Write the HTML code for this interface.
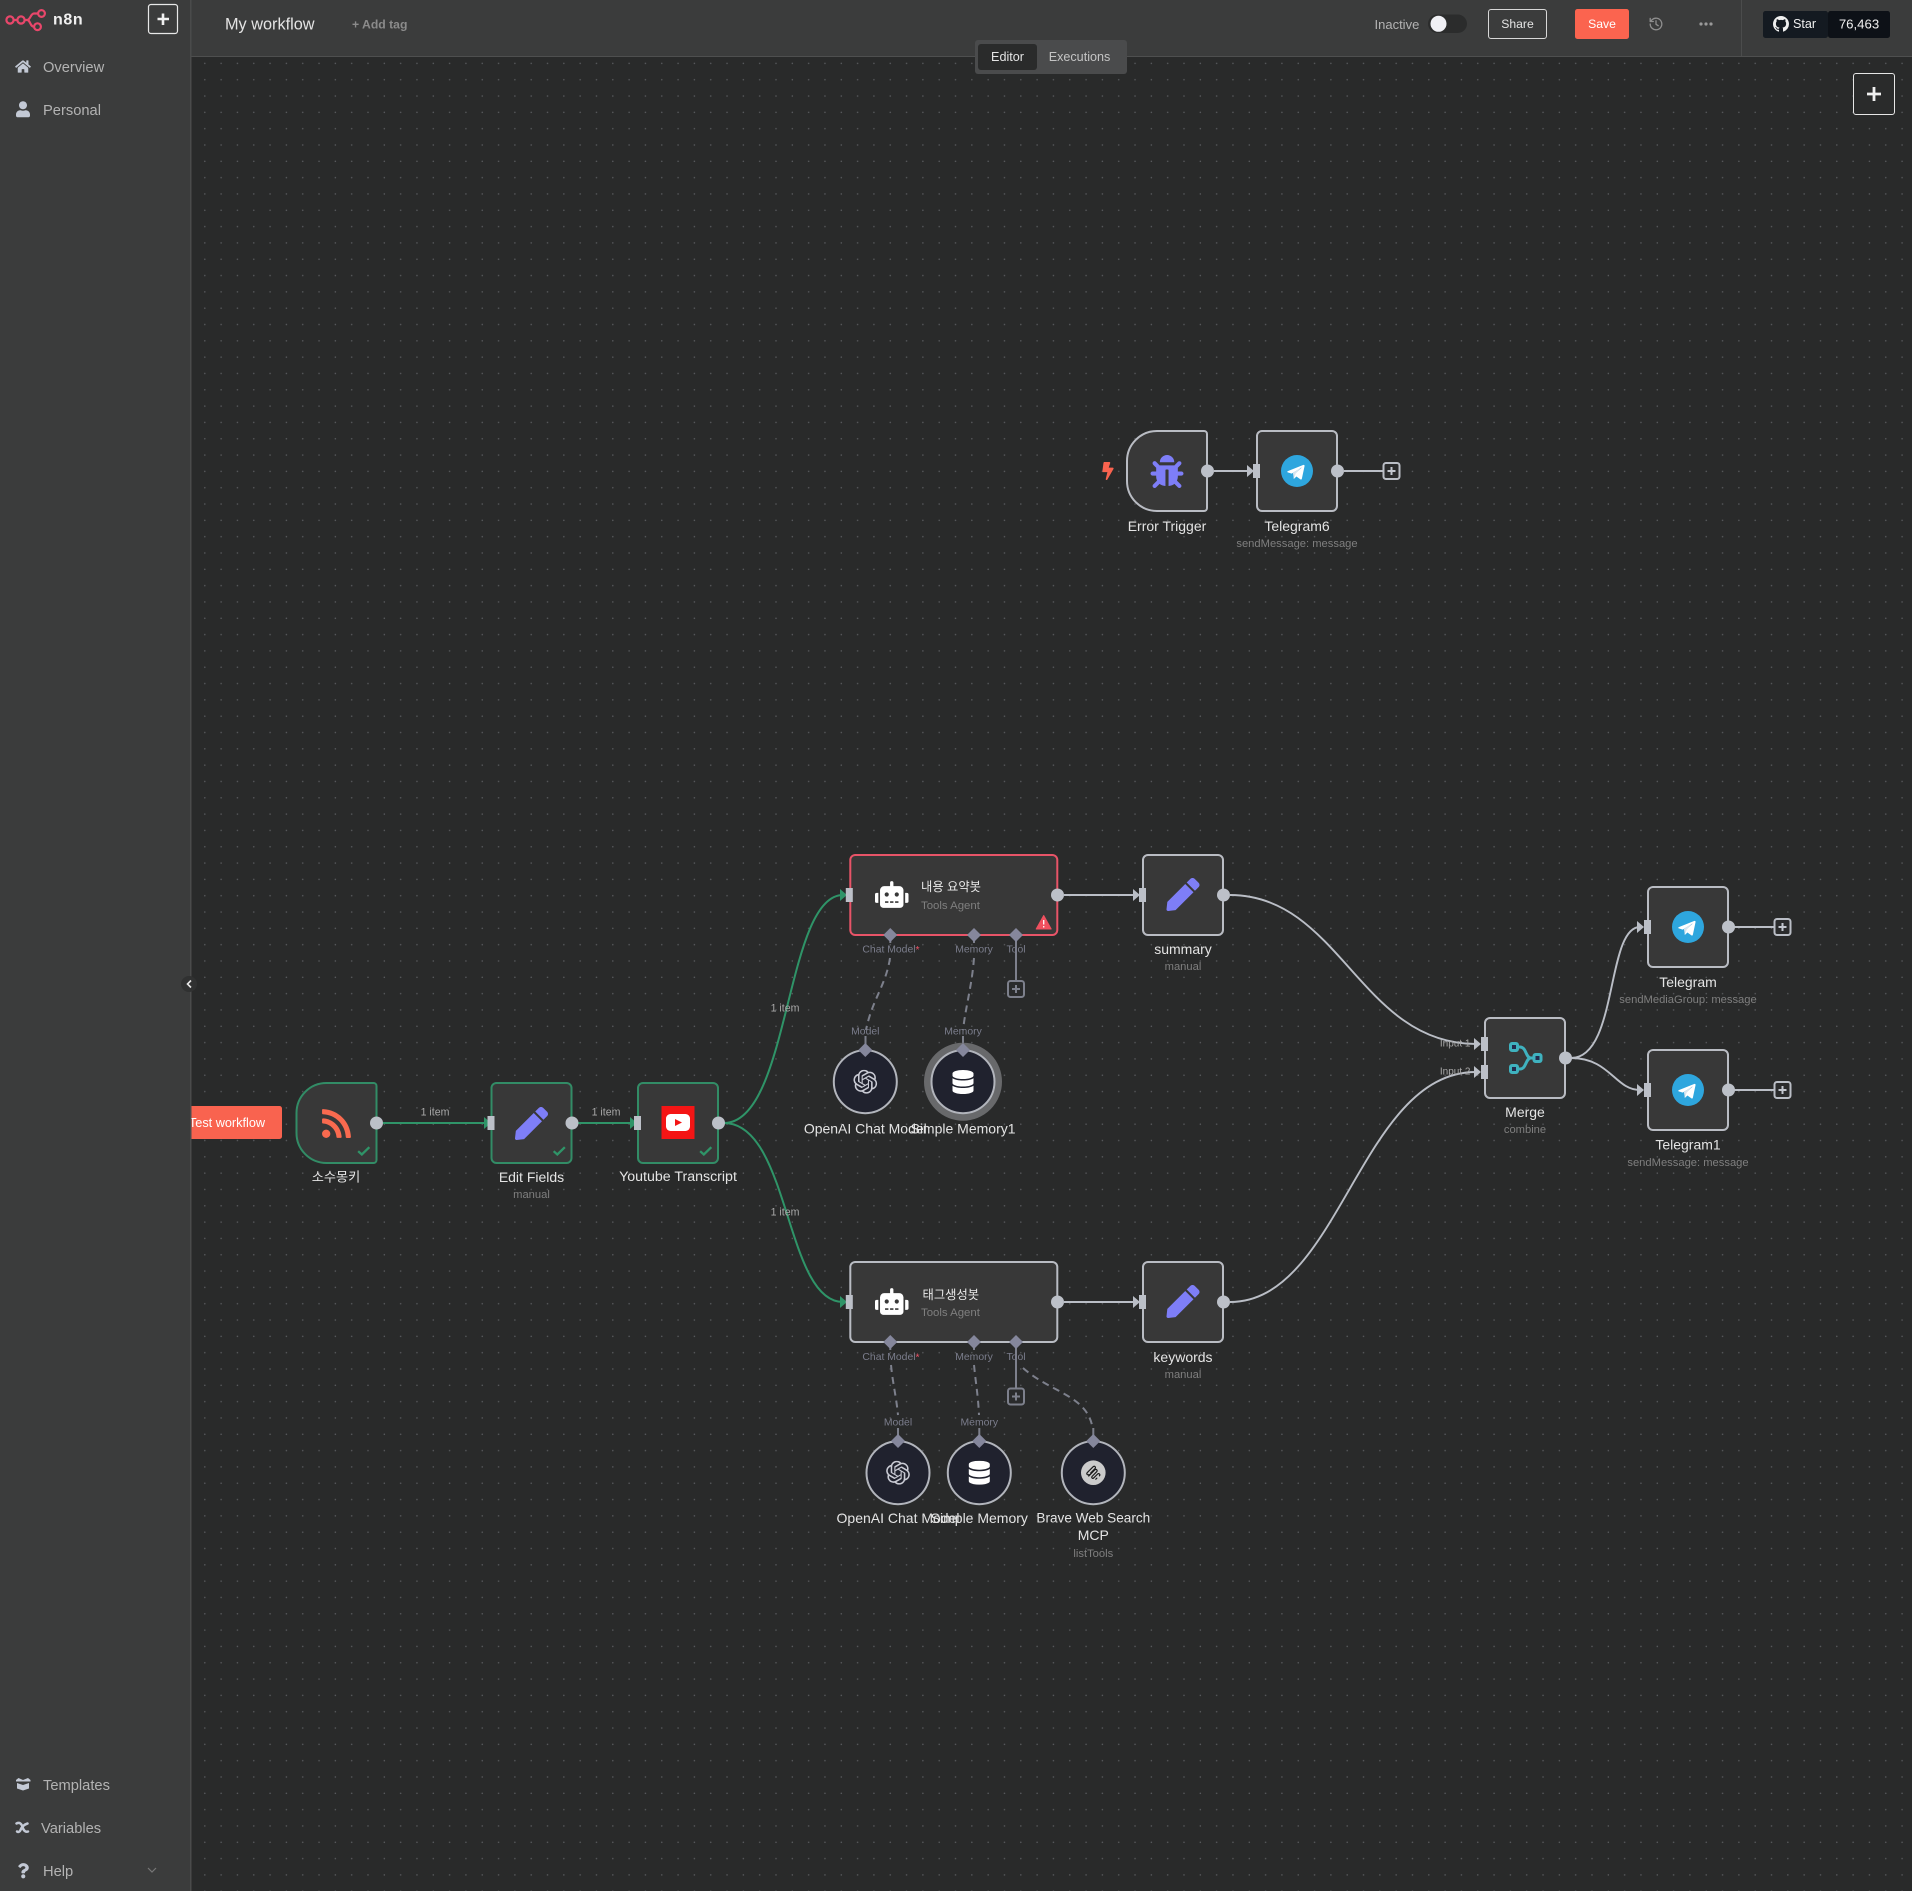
<!DOCTYPE html>
<html lang="en">
<head>
<meta charset="utf-8">
<title>My workflow - n8n</title>
<style>
html,body{margin:0;padding:0;background:#282929;width:1912px;height:1891px;overflow:hidden}
svg{display:block}
text{font-family:"Liberation Sans","Noto Sans CJK KR",sans-serif;dominant-baseline:central}
.l{font-size:14px;fill:#e4e4e4;text-anchor:middle;transform:translateY(.1px)}
.s{font-size:11.2px;fill:#7f7f7f;text-anchor:middle;transform:translateY(.8px)}
.a{font-size:10.4px;fill:#7b7d8c;text-anchor:middle;transform:translateY(.5px)}
.i{font-size:10.6px;fill:#a8a8a8;text-anchor:middle;transform:translateY(.5px)}
.n{font-size:14.7px;fill:#b3b3b3;transform:translateY(.8px)}
.t{transform:translateY(.8px)}
.node{fill:#383838;stroke:#b9bcc3;stroke-width:2}
.g{stroke:#328c66}
.e{fill:none;stroke:#babec6;stroke-width:1.9}
.eg{fill:none;stroke:#2f9468;stroke-width:2}
.d{fill:none;stroke:#7d808c;stroke-width:2;stroke-dasharray:7 5}
.sl{fill:none;stroke:#7d808c;stroke-width:2}
.dm{fill:#85879c}
.circ{fill:#20222e;stroke:#b2b5bc;stroke-width:2}
.o{fill:#bcc0c8}
.b{fill:#bcc0c8}
.ag{fill:#2f9468}
.aw{fill:#babec6}
.pl{fill:#2a2b2c;stroke:#babec6;stroke-width:2}
.plp{fill:none;stroke:#c3c7cf;stroke-width:2}
.pg{fill:#2a2b2c;stroke:#7d808c;stroke-width:2}
.pgp{fill:none;stroke:#7d808c;stroke-width:2}
</style>
</head>
<body>
<svg xmlns="http://www.w3.org/2000/svg" width="1912" height="1891" viewBox="0 0 1912 1891">
<defs>
<pattern id="dots" patternUnits="userSpaceOnUse" x="204" y="62.6" width="16.32" height="16.32">
<circle cx="0.8" cy="0.8" r="0.75" fill="#5a5c5f"/>
</pattern>
<symbol id="pen" viewBox="0 0 512 512"><path d="M290.74 93.24l128.02 128.02-277.99 277.99-114.14 12.6C11.35 513.54-1.56 500.62.14 485.34l12.7-114.22 277.9-277.88zm207.2-19.06l-60.11-60.11c-18.75-18.75-49.16-18.75-67.91 0l-56.55 56.55 128.02 128.02 56.55-56.55c18.75-18.76 18.75-49.16 0-67.91z"/></symbol>
<symbol id="bug" viewBox="0 0 512 512"><path d="M511.988 288.9c-.478 17.43-15.217 31.1-32.653 31.1H424v16c0 21.864-4.882 42.584-13.6 61.145l60.228 60.228c12.496 12.497 12.496 32.758 0 45.255-12.498 12.497-32.759 12.496-45.256 0l-54.736-54.736C345.886 467.965 314.351 480 280 480V236c0-6.627-5.373-12-12-12h-24c-6.627 0-12 5.373-12 12v244c-34.351 0-65.886-12.035-90.636-32.108l-54.736 54.736c-12.498 12.497-32.759 12.496-45.256 0-12.496-12.497-12.496-32.758 0-45.255l60.228-60.228C92.882 378.584 88 357.864 88 336v-16H32.666C15.23 320 .491 306.33.013 288.9-.484 270.816 14.028 256 32 256h56v-58.745l-46.628-46.628c-12.496-12.497-12.496-32.758 0-45.255 12.498-12.497 32.758-12.497 45.256 0L141.255 160h229.489l54.627-54.627c12.498-12.497 32.758-12.497 45.256 0 12.496 12.497 12.496 32.758 0 45.255L424 197.255V256h56c17.972 0 32.484 14.816 31.988 32.9zM257 0c-61.856 0-112 50.144-112 112h224C369 50.144 318.856 0 257 0z"/></symbol>
<symbol id="rss" viewBox="0 0 448 512"><path d="M128.081 415.959c0 35.369-28.672 64.041-64.041 64.041S0 451.328 0 415.959s28.672-64.041 64.041-64.041 64.04 28.673 64.04 64.041zm175.66 47.25c-8.354-154.6-132.185-278.587-286.95-286.95C7.656 175.765 0 183.105 0 192.253v48.069c0 8.415 6.49 15.472 14.887 16.018 111.832 7.284 201.473 96.702 208.772 208.772.547 8.397 7.604 14.887 16.018 14.887h48.069c9.149.001 16.489-7.655 15.995-16.79zm144.249.288C439.596 229.677 251.465 40.445 16.503 32.01 7.473 31.686 0 38.981 0 48.016v48.068c0 8.625 6.835 15.645 15.453 15.999 191.179 7.839 344.627 161.316 352.465 352.465.353 8.618 7.373 15.453 15.999 15.453h48.068c9.034-.001 16.329-7.474 16.005-16.504z"/></symbol>
<symbol id="db" viewBox="0 0 448 512"><path d="M448 73.143v45.714C448 159.143 347.667 192 224 192S0 159.143 0 118.857V73.143C0 32.857 100.333 0 224 0s224 32.857 224 73.143zM448 176v102.857C448 319.143 347.667 352 224 352S0 319.143 0 278.857V176c48.125 33.143 136.208 48.572 224 48.572S399.874 209.143 448 176zm0 160v102.857C448 479.143 347.667 512 224 512S0 479.143 0 438.857V336c48.125 33.143 136.208 48.572 224 48.572S399.874 369.143 448 336z"/></symbol>
<symbol id="robot" viewBox="0 0 640 512"><path d="M32,224H64V416H32A31.96166,31.96166,0,0,1,0,384V256A31.96166,31.96166,0,0,1,32,224Zm512-48V448a64.06328,64.06328,0,0,1-64,64H160a64.06328,64.06328,0,0,1-64-64V176a79.974,79.974,0,0,1,80-80H288V32a32,32,0,0,1,64,0V96H464A79.974,79.974,0,0,1,544,176ZM264,256a40,40,0,1,0-40,40A39.997,39.997,0,0,0,264,256Zm-8,128H192v32h64Zm96,0H288v32h64ZM456,256a40,40,0,1,0-40,40A39.997,39.997,0,0,0,456,256Zm-8,128H384v32h64ZM640,256V384a31.96166,31.96166,0,0,1-32,32H576V224h32A31.96166,31.96166,0,0,1,640,256Z"/></symbol>
<symbol id="openai" viewBox="0 0 24 24"><path d="M22.2819 9.8211a5.9847 5.9847 0 0 0-.5157-4.9108 6.0462 6.0462 0 0 0-6.5098-2.9A6.0651 6.0651 0 0 0 4.9807 4.1818a5.9847 5.9847 0 0 0-3.9977 2.9 6.0462 6.0462 0 0 0 .7427 7.0966 5.98 5.98 0 0 0 .511 4.9107 6.051 6.051 0 0 0 6.5146 2.9001A5.9847 5.9847 0 0 0 13.2599 24a6.0557 6.0557 0 0 0 5.7718-4.2058 5.9894 5.9894 0 0 0 3.9977-2.9001 6.0557 6.0557 0 0 0-.7475-7.0729zm-9.022 12.6081a4.4755 4.4755 0 0 1-2.8764-1.0408l.1419-.0804 4.7783-2.7582a.7948.7948 0 0 0 .3927-.6813v-6.7369l2.02 1.1686a.071.071 0 0 1 .038.052v5.5826a4.504 4.504 0 0 1-4.4945 4.4944zm-9.6607-4.1254a4.4708 4.4708 0 0 1-.5346-3.0137l.142.0852 4.783 2.7582a.7712.7712 0 0 0 .7806 0l5.8428-3.3685v2.3324a.0804.0804 0 0 1-.0332.0615L9.74 19.9502a4.4992 4.4992 0 0 1-6.1408-1.6464zM2.3408 7.8956a4.485 4.485 0 0 1 2.3655-1.9728V11.6a.7664.7664 0 0 0 .3879.6765l5.8144 3.3543-2.0201 1.1685a.0757.0757 0 0 1-.071 0l-4.8303-2.7865A4.504 4.504 0 0 1 2.3408 7.872zm16.5963 3.8558L13.1038 8.364 15.1192 7.2a.0757.0757 0 0 1 .071 0l4.8303 2.7913a4.4944 4.4944 0 0 1-.6765 8.1042v-5.6772a.79.79 0 0 0-.407-.667zm2.0107-3.0231l-.142-.0852-4.7735-2.7818a.7759.7759 0 0 0-.7854 0L9.409 9.2297V6.8974a.0662.0662 0 0 1 .0284-.0615l4.8303-2.7866a4.4992 4.4992 0 0 1 6.6802 4.66zM8.3065 12.863l-2.02-1.1638a.0804.0804 0 0 1-.038-.0567V6.0742a4.4992 4.4992 0 0 1 7.3757-3.4537l-.142.0805L8.704 5.459a.7948.7948 0 0 0-.3927.6813zm1.0976-2.3654l2.602-1.4998 2.6069 1.4998v2.9994l-2.5974 1.4997-2.6067-1.4997Z"/></symbol>
<symbol id="tg" viewBox="0 0 40 40"><circle cx="20" cy="20" r="20" fill="#2ea6de"/><path d="M8.5 20.2l19.5-7.8c.9-.35 1.7.2 1.4 1.6l-3.3 15.6c-.25 1.1-.9 1.4-1.8.9l-5-3.7-2.45 2.35c-.27.27-.5.5-1 .5l.35-5.1 9.2-8.3c.4-.35-.1-.55-.62-.2l-11.4 7.2-4.9-1.5c-1.05-.33-1.07-1.05.22-1.55z" fill="#fff"/><path d="M16.1 29.65l-1.2-7.2 11.9-8.2-8.5 9z" fill="#dbe6ee"/></symbol>
<symbol id="home" viewBox="0 0 576 512"><path d="M280.37 148.26L96 300.11V464a16 16 0 0 0 16 16l112.06-.29a16 16 0 0 0 15.92-16V368a16 16 0 0 1 16-16h64a16 16 0 0 1 16 16v95.64a16 16 0 0 0 16 16.05L464 480a16 16 0 0 0 16-16V300L295.67 148.26a12.19 12.19 0 0 0-15.3 0zM571.6 251.47L488 182.56V44.05a12 12 0 0 0-12-12h-56a12 12 0 0 0-12 12v72.61L318.47 43a48 48 0 0 0-61 0L4.34 251.47a12 12 0 0 0-1.6 16.9l25.5 31A12 12 0 0 0 45.15 301l235.22-193.74a12.19 12.19 0 0 1 15.3 0L530.9 301a12 12 0 0 0 16.9-1.6l25.5-31a12 12 0 0 0-1.7-16.93z"/></symbol>
<symbol id="user" viewBox="0 0 448 512"><path d="M224 256c70.7 0 128-57.3 128-128S294.7 0 224 0 96 57.3 96 128s57.3 128 128 128zm89.6 32h-16.7c-22.2 10.2-46.9 16-72.9 16s-50.6-5.8-72.9-16h-16.7C60.2 288 0 348.2 0 422.4V464c0 26.5 21.5 48 48 48h352c26.5 0 48-21.5 48-48v-41.6c0-74.2-60.2-134.4-134.4-134.4z"/></symbol>
<symbol id="q" viewBox="0 0 384 512"><path d="M202.021 0C122.202 0 70.503 32.703 29.914 91.026c-7.363 10.58-5.093 25.086 5.178 32.874l43.138 32.709c10.373 7.865 25.132 6.026 33.253-4.148 25.049-31.381 43.63-49.449 82.757-49.449 30.764 0 68.816 19.799 68.816 49.631 0 22.552-18.617 34.134-48.993 51.164-35.423 19.86-82.299 44.576-82.299 106.405V320c0 13.255 10.745 24 24 24h72.471c13.255 0 24-10.745 24-24v-5.773c0-42.86 125.268-44.645 125.268-160.627C377.504 66.256 286.902 0 202.021 0zM192 373.459c-38.196 0-69.271 31.075-69.271 69.271 0 38.195 31.075 69.27 69.271 69.27s69.271-31.075 69.271-69.271-31.075-69.27-69.271-69.27z"/></symbol>
<symbol id="bolt" viewBox="0 0 320 512"><path d="M296 160H180.6l42.6-129.8C227.2 15 215.7 0 200 0H56C44 0 33.8 8.9 32.2 20.8l-32 240C-1.7 275.2 9.5 288 24 288h118.7L96.6 482.5c-3.6 15.2 8 29.5 23.3 29.5 8.4 0 16.4-4.4 20.8-12l176-304c9.3-15.9-2.2-36-20.7-36z"/></symbol>
<symbol id="hist" viewBox="0 0 16 16"><path d="M2.2 8a5.8 5.8 0 1 0 1.9-4.3L2.2 5.5M2.2 2.4v3.1h3.1M8 4.8v3.5l2.2 1.4" fill="none" stroke="currentColor" stroke-width="1.3" stroke-linecap="round" stroke-linejoin="round"/></symbol>
<symbol id="gh" viewBox="0 0 16 16"><path d="M8 0C3.58 0 0 3.58 0 8c0 3.54 2.29 6.53 5.47 7.59.4.07.55-.17.55-.38 0-.19-.01-.82-.01-1.49-2.01.37-2.53-.49-2.69-.94-.09-.23-.48-.94-.82-1.13-.28-.15-.68-.52-.01-.53.63-.01 1.08.58 1.23.82.72 1.21 1.87.87 2.33.66.07-.52.28-.87.51-1.07-1.78-.2-3.64-.89-3.64-3.95 0-.87.31-1.59.82-2.15-.08-.2-.36-1.02.08-2.12 0 0 .67-.21 2.2.82.64-.18 1.32-.27 2-.27.68 0 1.36.09 2 .27 1.53-1.04 2.2-.82 2.2-.82.44 1.1.16 1.92.08 2.12.51.56.82 1.27.82 2.15 0 3.07-1.87 3.75-3.65 3.95.29.25.54.73.54 1.48 0 1.07-.01 1.93-.01 2.2 0 .21.15.46.55.38A8.013 8.013 0 0016 8c0-4.42-3.58-8-8-8z"/></symbol>
<symbol id="check" viewBox="0 0 14 10"><path d="M1.2 5.2l3.8 3.4L12.8 1" fill="none" stroke="#2f9468" stroke-width="2.4"/></symbol>
<symbol id="mcp" viewBox="0 0 24 24"><path d="M7 16.2L14.3 8.8c1.6-1.6 3.9.6 2.3 2.2l-5.5 5.6M9.3 12.6l5.2-5.3c1.7-1.7-.6-3.9-2.3-2.2L5.3 12M5.3 12c-1.6 1.6.6 3.9 2.2 2.3M11.1 16.6c-1.4 1.5.6 3.2 1.9 1.9l4.6-4.6c1.6-1.6 3.7.5 2.2 2.1M15.5 20l1.3-1.3" fill="none" stroke="#1a1a1a" stroke-width="1.4" stroke-linecap="round" transform="translate(-.5 -.2)"/></symbol>
</defs>

<!-- canvas -->
<rect x="191" y="57" width="1721" height="1834" fill="#292a2a"/>
<rect x="191" y="57" width="1721" height="1834" fill="url(#dots)"/>

<!-- connections -->
<path class="e" d="M1214 471H1248"/>
<polygon class="aw" points="1247,465 1254,471 1247,477"/>
<path class="e" d="M1344 471H1383"/>

<path class="eg" d="M383 1123H486"/>
<polygon class="ag" points="484,1117 491,1123 484,1129"/>
<path class="eg" d="M578 1123H632"/>
<polygon class="ag" points="630,1117 637,1123 630,1129"/>
<path class="eg" d="M724 1123C790 1123 785 895 843 895"/>
<path class="eg" d="M724 1123C790 1123 785 1302 843 1302"/>
<polygon class="ag" points="840,889 847,895 840,901"/>
<polygon class="ag" points="840,1296 847,1302 840,1308"/>

<path class="e" d="M1064 895H1137"/>
<polygon class="aw" points="1133,889 1140,895 1133,901"/>
<path class="e" d="M1064 1302H1137"/>
<polygon class="aw" points="1133,1296 1140,1302 1133,1308"/>
<path class="e" d="M1230 895C1340 895 1360 1044 1476 1044"/>
<path class="e" d="M1230 1302C1340 1302 1360 1072 1476 1072"/>
<polygon class="aw" points="1474,1038 1481,1044 1474,1050"/>
<polygon class="aw" points="1474,1066 1481,1072 1474,1078"/>
<path class="e" d="M1571 1058C1618 1058 1606 927 1640 927"/>
<path class="e" d="M1571 1058C1610 1058 1615 1090 1640 1090"/>
<polygon class="aw" points="1637,921 1644,927 1637,933"/>
<polygon class="aw" points="1637,1084 1644,1090 1637,1096"/>
<path class="e" d="M1734 927H1774"/>
<path class="e" d="M1734 1090H1774"/>

<!-- AI connections -->
<path class="d" d="M890 958C886 985 872 1000 866 1030"/>
<path class="d" d="M974 958C972 985 966 1005 963 1030"/>
<path class="sl" d="M865.5 1036V1050M963 1036V1050M890.3 935V943M974 935V943M1016 935V980"/>
<path class="d" d="M891 1365C893 1385 896 1395 898 1415"/>
<path class="d" d="M974 1365C976 1385 978 1395 979 1415"/>
<path class="d" d="M1023 1368C1050 1392 1085 1395 1092 1425"/>
<path class="sl" d="M898 1428V1441M979.3 1428V1441M1093.3 1428V1441M890.3 1342V1350M974 1342V1350M1016 1342V1388"/>

<!-- Test workflow button -->
<rect x="179" y="1106" width="103" height="33" rx="2.5" fill="#f9634f"/>
<text x="227" y="1123" fill="#fff" text-anchor="middle" style="font-size:12.7px">Test workflow</text>

<!-- Nodes -->
<path class="node" d="M1204 431a3 3 0 0 1 3 3V508a3 3 0 0 1-3 3H1157a30 30 0 0 1-30-30V461a30 30 0 0 1 30-30Z"/>
<use href="#bug" x="1150.5" y="455" width="33" height="33" fill="#7e7ef7"/>
<rect class="node" x="1257" y="431" width="80" height="80" rx="5"/>
<use href="#tg" x="1281" y="455" width="32" height="32"/>

<path class="node g" d="M373.5 1083a3 3 0 0 1 3 3V1160a3 3 0 0 1-3 3H326.5a30 30 0 0 1-30-30V1113a30 30 0 0 1 30-30Z"/>
<use href="#rss" x="322" y="1107" width="29" height="33" fill="#f96a4f"/>
<rect class="node g" x="491.5" y="1083" width="80" height="80" rx="5"/>
<use href="#pen" x="515" y="1107" width="33" height="33" fill="#7e7ef7"/>
<rect class="node g" x="638" y="1083" width="80" height="80" rx="5"/>
<rect x="661.5" y="1106" width="33" height="33" fill="#f41515"/>
<rect x="666" y="1114" width="24" height="17" rx="4.5" fill="#fff"/>
<polygon points="675,1119 682,1122.5 675,1126" fill="#f41515"/>

<rect class="node" x="850.3" y="855" width="207" height="80" rx="5" style="stroke:#e85468"/>
<use href="#robot" x="875" y="881" width="33.5" height="27" fill="#fff"/>
<rect class="node" x="850.3" y="1262" width="207" height="80" rx="5"/>
<use href="#robot" x="875" y="1288" width="33.5" height="27" fill="#fff"/>
<rect class="node" x="1143" y="855" width="80" height="80" rx="5"/>
<use href="#pen" x="1166.5" y="878" width="33" height="33" fill="#7e7ef7"/>
<rect class="node" x="1143" y="1262" width="80" height="80" rx="5"/>
<use href="#pen" x="1166.5" y="1285" width="33" height="33" fill="#7e7ef7"/>
<rect class="node" x="1485" y="1018" width="80" height="80" rx="5"/>
<g fill="none" stroke="#3fb2bf" stroke-width="3">
<path d="M1517 1047H1520C1526.5 1047 1525.5 1058 1531 1058H1534M1517 1069H1520C1526.5 1069 1525.5 1058 1531 1058"/>
<rect x="1510.5" y="1043.5" width="7" height="7" rx="1.5" fill="#232a4c"/>
<rect x="1534" y="1054.5" width="7" height="7" rx="1.5" fill="#232a4c"/>
<rect x="1510.5" y="1065.5" width="7" height="7" rx="1.5" fill="#232a4c"/>
</g>
<rect class="node" x="1648" y="887" width="80" height="80" rx="5"/>
<use href="#tg" x="1672" y="911" width="32" height="32"/>
<rect class="node" x="1648" y="1050" width="80" height="80" rx="5"/>
<use href="#tg" x="1672" y="1074" width="32" height="32"/>

<!-- circular nodes -->
<circle cx="963" cy="1081.7" r="35.5" fill="none" stroke="#68696b" stroke-width="7"/>
<circle class="circ" cx="865.3" cy="1081.7" r="31.5"/>
<use href="#openai" x="853.3" y="1069.7" width="24" height="24" fill="#c9cbd4"/>
<circle class="circ" cx="963" cy="1081.7" r="31.5"/>
<use href="#db" x="952" y="1070" width="22" height="24" fill="#fff"/>
<circle class="circ" cx="898" cy="1472.7" r="31.5"/>
<use href="#openai" x="886" y="1460.7" width="24" height="24" fill="#c9cbd4"/>
<circle class="circ" cx="979.3" cy="1472.7" r="31.5"/>
<use href="#db" x="968.3" y="1460.7" width="22" height="24" fill="#fff"/>
<circle class="circ" cx="1093.3" cy="1472.7" r="31.5"/>
<circle cx="1093.3" cy="1472.7" r="12.3" fill="#cbcbcb"/>
<use href="#mcp" x="1083.3" y="1462.7" width="20" height="20"/>

<!-- status -->
<use href="#check" x="357" y="1146" width="13.5" height="10"/>
<use href="#check" x="552.5" y="1146" width="13.5" height="10"/>
<use href="#check" x="699" y="1146" width="13.5" height="10"/>
<path d="M1043.7 915.5l7.5 13.5h-15z" fill="#f0505f" stroke="#f0505f" stroke-width="1" stroke-linejoin="round"/>
<path d="M1043.7 920v4.5M1043.7 926v1.5" stroke="#fff" stroke-width="1.3" fill="none"/>
<use href="#bolt" x="1102" y="462" width="12" height="18" fill="#f9634f"/>

<!-- ports -->
<g class="o">
<circle cx="1207.5" cy="471" r="6.5"/><circle cx="1337.5" cy="471" r="6.5"/>
<circle cx="376.5" cy="1123" r="6.5"/><circle cx="572" cy="1123" r="6.5"/><circle cx="718.5" cy="1123" r="6.5"/>
<circle cx="1057.5" cy="895" r="6.5"/><circle cx="1057.5" cy="1302" r="6.5"/>
<circle cx="1223.5" cy="895" r="6.5"/><circle cx="1223.5" cy="1302" r="6.5"/>
<circle cx="1565.5" cy="1058" r="6.5"/><circle cx="1728.5" cy="927" r="6.5"/><circle cx="1728.5" cy="1090" r="6.5"/>
</g>
<g class="b">
<rect x="1253" y="464" width="7" height="14"/>
<rect x="487.5" y="1116" width="7" height="14"/><rect x="634" y="1116" width="7" height="14"/>
<rect x="845.8" y="888" width="7" height="14"/><rect x="845.8" y="1295" width="7" height="14"/>
<rect x="1139" y="888" width="7" height="14"/><rect x="1139" y="1295" width="7" height="14"/>
<rect x="1481" y="1037" width="7" height="14"/><rect x="1481" y="1065" width="7" height="14"/>
<rect x="1644" y="920" width="7" height="14"/><rect x="1644" y="1083" width="7" height="14"/>
</g>
<g class="dm">
<polygon points="890.3,928 897.3,935 890.3,942 883.3,935"/>
<polygon points="974,928 981,935 974,942 967,935"/>
<polygon points="1016,928 1023,935 1016,942 1009,935"/>
<polygon points="890.3,1335 897.3,1342 890.3,1349 883.3,1342"/>
<polygon points="974,1335 981,1342 974,1349 967,1342"/>
<polygon points="1016,1335 1023,1342 1016,1349 1009,1342"/>
<polygon points="865.3,1043 872.3,1050 865.3,1057 858.3,1050"/>
<polygon points="963,1043 970,1050 963,1057 956,1050"/>
<polygon points="898,1434 905,1441 898,1448 891,1441"/>
<polygon points="979.3,1434 986.3,1441 979.3,1448 972.3,1441"/>
<polygon points="1093.3,1434 1100.3,1441 1093.3,1448 1086.3,1441"/>
</g>

<!-- plus buttons -->
<g><rect class="pl" x="1383.5" y="463" width="16" height="16" rx="2.5"/><path class="plp" d="M1387.5 471h8M1391.5 467v8"/></g>
<g><rect class="pl" x="1774.5" y="919" width="16" height="16" rx="2.5"/><path class="plp" d="M1778.5 927h8M1782.5 923v8"/></g>
<g><rect class="pl" x="1774.5" y="1082" width="16" height="16" rx="2.5"/><path class="plp" d="M1778.5 1090h8M1782.5 1086v8"/></g>
<g><rect class="pg" x="1008" y="981" width="16" height="16" rx="2.5"/><path class="pgp" d="M1012 989h8M1016 985v8"/></g>
<g><rect class="pg" x="1008" y="1388.5" width="16" height="16" rx="2.5"/><path class="pgp" d="M1012 1396.5h8M1016 1392.5v8"/></g>

<!-- labels -->
<text class="l" x="1167" y="525.7">Error Trigger</text>
<text class="l" x="1297" y="525.7">Telegram6</text>
<text class="s" x="1297" y="543.3">sendMessage: message</text>
<text class="l" x="336" y="1176.7" style="font-size:13.2px">소수몽키</text>
<text class="l" x="531.5" y="1176.7">Edit Fields</text>
<text class="s" x="531.5" y="1194">manual</text>
<text class="l" x="678" y="1176.7" style="font-size:14.2px">Youtube Transcript</text>
<text class="i" x="435" y="1112">1 item</text>
<text class="i" x="606" y="1112">1 item</text>
<text class="i" x="785" y="1008">1 item</text>
<text class="i" x="785" y="1212">1 item</text>

<text class="t" x="921" y="886" fill="#e8e8e8" style="font-size:12.3px">내용 요약봇</text>
<text class="t" x="921" y="905" fill="#7f7f7f" style="font-size:11.4px">Tools Agent</text>
<text class="t" x="922.5" y="1294" fill="#e8e8e8" style="font-size:12.3px">태그생성봇</text>
<text class="t" x="921" y="1312" fill="#7f7f7f" style="font-size:11.4px">Tools Agent</text>

<text class="a" x="891" y="949.5">Chat Model<tspan fill="#ee5267">*</tspan></text>
<text class="a" x="974" y="949.5">Memory</text>
<text class="a" x="1016" y="949.5">Tool</text>
<text class="a" x="891" y="1357">Chat Model<tspan fill="#ee5267">*</tspan></text>
<text class="a" x="974" y="1357">Memory</text>
<text class="a" x="1016" y="1357">Tool</text>
<text class="a" x="865.3" y="1031.7">Model</text>
<text class="a" x="963" y="1031.7">Memory</text>
<text class="a" x="898" y="1422.7">Model</text>
<text class="a" x="979.3" y="1422.7">Memory</text>

<text class="l" x="1183" y="949">summary</text>
<text class="s" x="1183" y="966.3">manual</text>
<text class="l" x="1183" y="1356.7">keywords</text>
<text class="s" x="1183" y="1374">manual</text>
<text class="l" x="865.3" y="1128.3">OpenAI Chat Model</text>
<text class="l" x="963" y="1128.3">Simple Memory1</text>
<text class="l" x="898" y="1518">OpenAI Chat Model</text>
<text class="l" x="979.3" y="1518">Simple Memory</text>
<text class="l" x="1093.3" y="1518" style="font-size:13.6px">Brave Web Search</text>
<text class="l" x="1093.3" y="1535">MCP</text>
<text class="s" x="1093.3" y="1553">listTools</text>
<text class="l" x="1525" y="1111.7">Merge</text>
<text class="s" x="1525" y="1129.3">combine</text>
<text class="l" x="1688" y="981.7">Telegram</text>
<text class="s" x="1688" y="999.3">sendMediaGroup: message</text>
<text class="l" x="1688" y="1144.3">Telegram1</text>
<text class="s" x="1688" y="1162.3">sendMessage: message</text>
<text class="i" x="1470.5" y="1043.7" style="text-anchor:end;font-size:10px">Input 1</text>
<text class="i" x="1470.5" y="1071.7" style="text-anchor:end;font-size:10px">Input 2</text>

<!-- sidebar -->
<rect x="0" y="0" width="190" height="1891" fill="#3b3c3c"/>
<rect x="190" y="0" width="1.5" height="1891" fill="#4a4b4b"/>
<g fill="none" stroke="#e9476b" stroke-width="2.2" stroke-linecap="round">
<circle cx="10" cy="20" r="3.6"/><circle cx="21" cy="20" r="3.6"/><circle cx="41.5" cy="13.5" r="3.4"/><circle cx="37.5" cy="26.7" r="3.4"/>
<path d="M13.6 20H17.4M24.6 20H27C30.5 20 30.5 13.5 34 13.5H38M27 20C30.5 20 30 26.7 34 26.7"/>
</g>
<text x="53" y="20" fill="#f0f0f0" style="font-size:16px;font-weight:700;letter-spacing:.6px">n8n</text>
<rect x="148.5" y="4.5" width="29" height="29" rx="2.5" fill="none" stroke="#e8e8e8" stroke-width="1.2"/>
<path d="M157.5 19H169M163 13.5V25" stroke="#f0f0f0" stroke-width="2.6" fill="none"/>
<use href="#home" x="15" y="59.5" width="16" height="14" fill="#c3c9d5"/>
<text class="n" x="43" y="67">Overview</text>
<use href="#user" x="16" y="101" width="14" height="16.5" fill="#c3c9d5"/>
<text class="n" x="43" y="110">Personal</text>
<path d="M16 1780l2.5-2 4.5 2 5-2 2.5 2v1.5H16zM17 1783l6 2 6-2v5.5l-6 2-6-2z" fill="#c3c9d5"/>
<text class="n" x="43" y="1785">Templates</text>
<path d="M16.5 1823.5c3-1.5 5 0 6 3.5s3 5.5 5.5 4.5M27.5 1823.5c-3.5 1-6 4-7 6.5-.8 2-2.5 2.5-3.5 1.5" fill="none" stroke="#c3c9d5" stroke-width="2.5" stroke-linecap="round"/>
<text class="n" x="41" y="1828">Variables</text>
<use href="#q" x="17.5" y="1863" width="11.5" height="15.5" fill="#c3c9d5"/>
<text class="n" x="43" y="1871">Help</text>
<path d="M148 1868l4 4 4-4" fill="none" stroke="#777" stroke-width="1.2"/>
<circle cx="189" cy="984" r="8" fill="#303131"/>
<path d="M191 980.5l-3.5 3.5 3.5 3.5" fill="none" stroke="#e6e6e6" stroke-width="1.6"/>

<!-- header -->
<rect x="191.5" y="0" width="1720.5" height="56" fill="#3b3c3c"/>
<rect x="191.5" y="56" width="1720.5" height="1" fill="#4e4f4f"/>
<text x="225" y="24.5" fill="#e4e4e4" style="font-size:16.3px">My workflow</text>
<text x="352" y="24.5" fill="#8b8b8b" style="font-size:12.2px;font-weight:700">+ Add tag</text>
<text x="1374.5" y="24.5" fill="#b3b3b3" style="font-size:13px">Inactive</text>
<rect x="1428" y="14.5" width="39" height="18.5" rx="9.25" fill="#2b2c2c"/>
<circle cx="1438.5" cy="23.8" r="8" fill="#f0f0f5"/>
<rect x="1488.5" y="9.5" width="58" height="29" rx="2.5" fill="none" stroke="#d8d8d8" stroke-width="1"/>
<text x="1517.5" y="24" fill="#e4e4e4" text-anchor="middle" style="font-size:12.2px">Share</text>
<rect x="1575" y="9" width="54" height="30" rx="2.5" fill="#fb644f"/>
<text x="1602" y="24" fill="#fff" text-anchor="middle" style="font-size:12.2px">Save</text>
<use href="#hist" x="1648" y="16" width="16" height="16" color="#8f8f8f"/>
<g fill="#9a9a9a"><circle cx="1701" cy="24" r="1.6"/><circle cx="1706" cy="24" r="1.6"/><circle cx="1711" cy="24" r="1.6"/></g>
<rect x="1741" y="0" width="1" height="56" fill="#4b4c4c"/>
<rect x="1763" y="11" width="65" height="27" rx="2.5" fill="#141a21"/>
<rect x="1828" y="11" width="62" height="27" rx="2.5" fill="#0d1117"/>
<use href="#gh" x="1773" y="16" width="16" height="16" fill="#f0f0f0"/>
<text x="1793" y="24" fill="#f0f0f0" style="font-size:12.6px">Star</text>
<text x="1859" y="24" fill="#f0f0f0" text-anchor="middle" style="font-size:13.2px">76,463</text>

<!-- tabs -->
<rect x="975" y="40" width="152" height="34" rx="3" fill="#4a4b4c"/>
<rect x="978" y="44" width="59" height="26" rx="3" fill="#2a2b2b"/>
<text x="1007.5" y="57" fill="#e4e4e4" text-anchor="middle" style="font-size:12.6px">Editor</text>
<text x="1079.5" y="57" fill="#c4c4c4" text-anchor="middle" style="font-size:12.6px">Executions</text>

<!-- top right plus -->
<rect x="1853.5" y="73.5" width="41" height="41" rx="2.5" fill="#2a2b2b" stroke="#e6e6e6" stroke-width="1"/>
<path d="M1867 94h14M1874 87v14" stroke="#f0f0f0" stroke-width="2.8" fill="none"/>
</svg>
</body>
</html>
